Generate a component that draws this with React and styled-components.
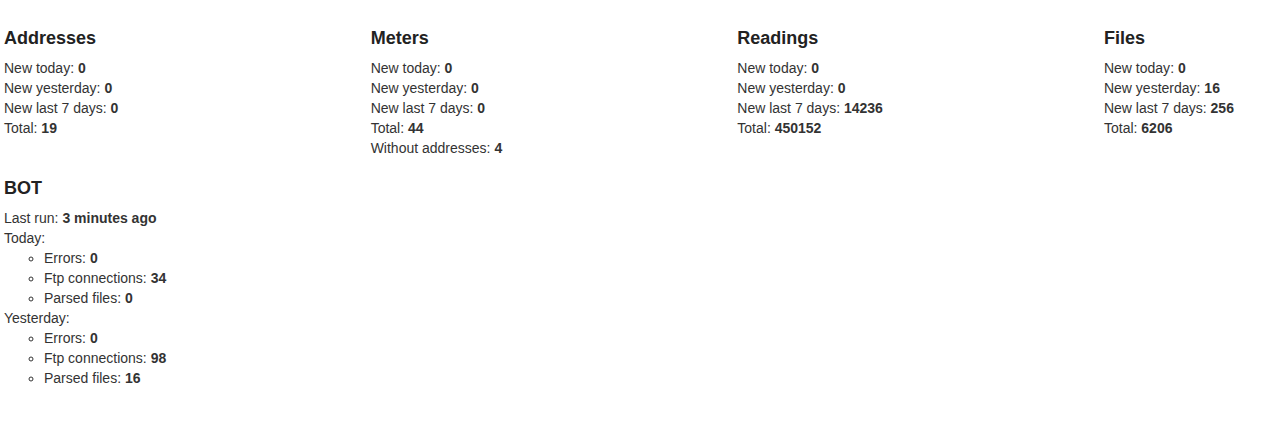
import React from "react";
import styled, { createGlobalStyle } from "styled-components";

const Global = createGlobalStyle`
  html, body { margin: 0; padding: 0; background: #fff; }
  body {
    font-family: "Liberation Sans", Arial, Helvetica, sans-serif;
    font-size: 14px;
    line-height: 20px;
    color: #333;
  }
`;

const Page = styled.div`
  padding: 8px 0 0 4px;
  overflow: hidden;
`;

const StatsRow = styled.div`
  display: grid;
  grid-template-columns: repeat(3, 366.67px) 1fr;
`;

const Section = styled.section``;

const Heading = styled.h3`
  font-size: 18px;
  font-weight: 700;
  line-height: 20px;
  margin: 20px 0 10px;
  color: #222;
`;

const Line = styled.div`
  line-height: 20px;
`;

const List = styled.ul`
  margin: 0;
  padding-left: 40px;
  list-style-type: circle;
`;

const Item = styled.li`
  line-height: 20px;
`;

const stats = [
  {
    title: "Addresses",
    rows: [
      ["New today", "0"],
      ["New yesterday", "0"],
      ["New last 7 days", "0"],
      ["Total", "19"],
    ],
  },
  {
    title: "Meters",
    rows: [
      ["New today", "0"],
      ["New yesterday", "0"],
      ["New last 7 days", "0"],
      ["Total", "44"],
      ["Without addresses", "4"],
    ],
  },
  {
    title: "Readings",
    rows: [
      ["New today", "0"],
      ["New yesterday", "0"],
      ["New last 7 days", "14236"],
      ["Total", "450152"],
    ],
  },
  {
    title: "Files",
    rows: [
      ["New today", "0"],
      ["New yesterday", "16"],
      ["New last 7 days", "256"],
      ["Total", "6206"],
    ],
  },
];

const botDays = [
  { label: "Today", errors: "0", ftp: "34", parsed: "0" },
  { label: "Yesterday", errors: "0", ftp: "98", parsed: "16" },
];

export default function App() {
  return (
    <>
      <Global />
      <Page>
        <StatsRow>
          {stats.map((s) => (
            <Section key={s.title}>
              <Heading>{s.title}</Heading>
              {s.rows.map(([k, v]) => (
                <Line key={k}>
                  {k}: <b>{v}</b>
                </Line>
              ))}
            </Section>
          ))}
        </StatsRow>
        <Section>
          <Heading>BOT</Heading>
          <Line>
            Last run: <b>3 minutes ago</b>
          </Line>
          {botDays.map((d) => (
            <React.Fragment key={d.label}>
              <Line>{d.label}:</Line>
              <List>
                <Item>
                  Errors: <b>{d.errors}</b>
                </Item>
                <Item>
                  Ftp connections: <b>{d.ftp}</b>
                </Item>
                <Item>
                  Parsed files: <b>{d.parsed}</b>
                </Item>
              </List>
            </React.Fragment>
          ))}
        </Section>
      </Page>
    </>
  );
}
